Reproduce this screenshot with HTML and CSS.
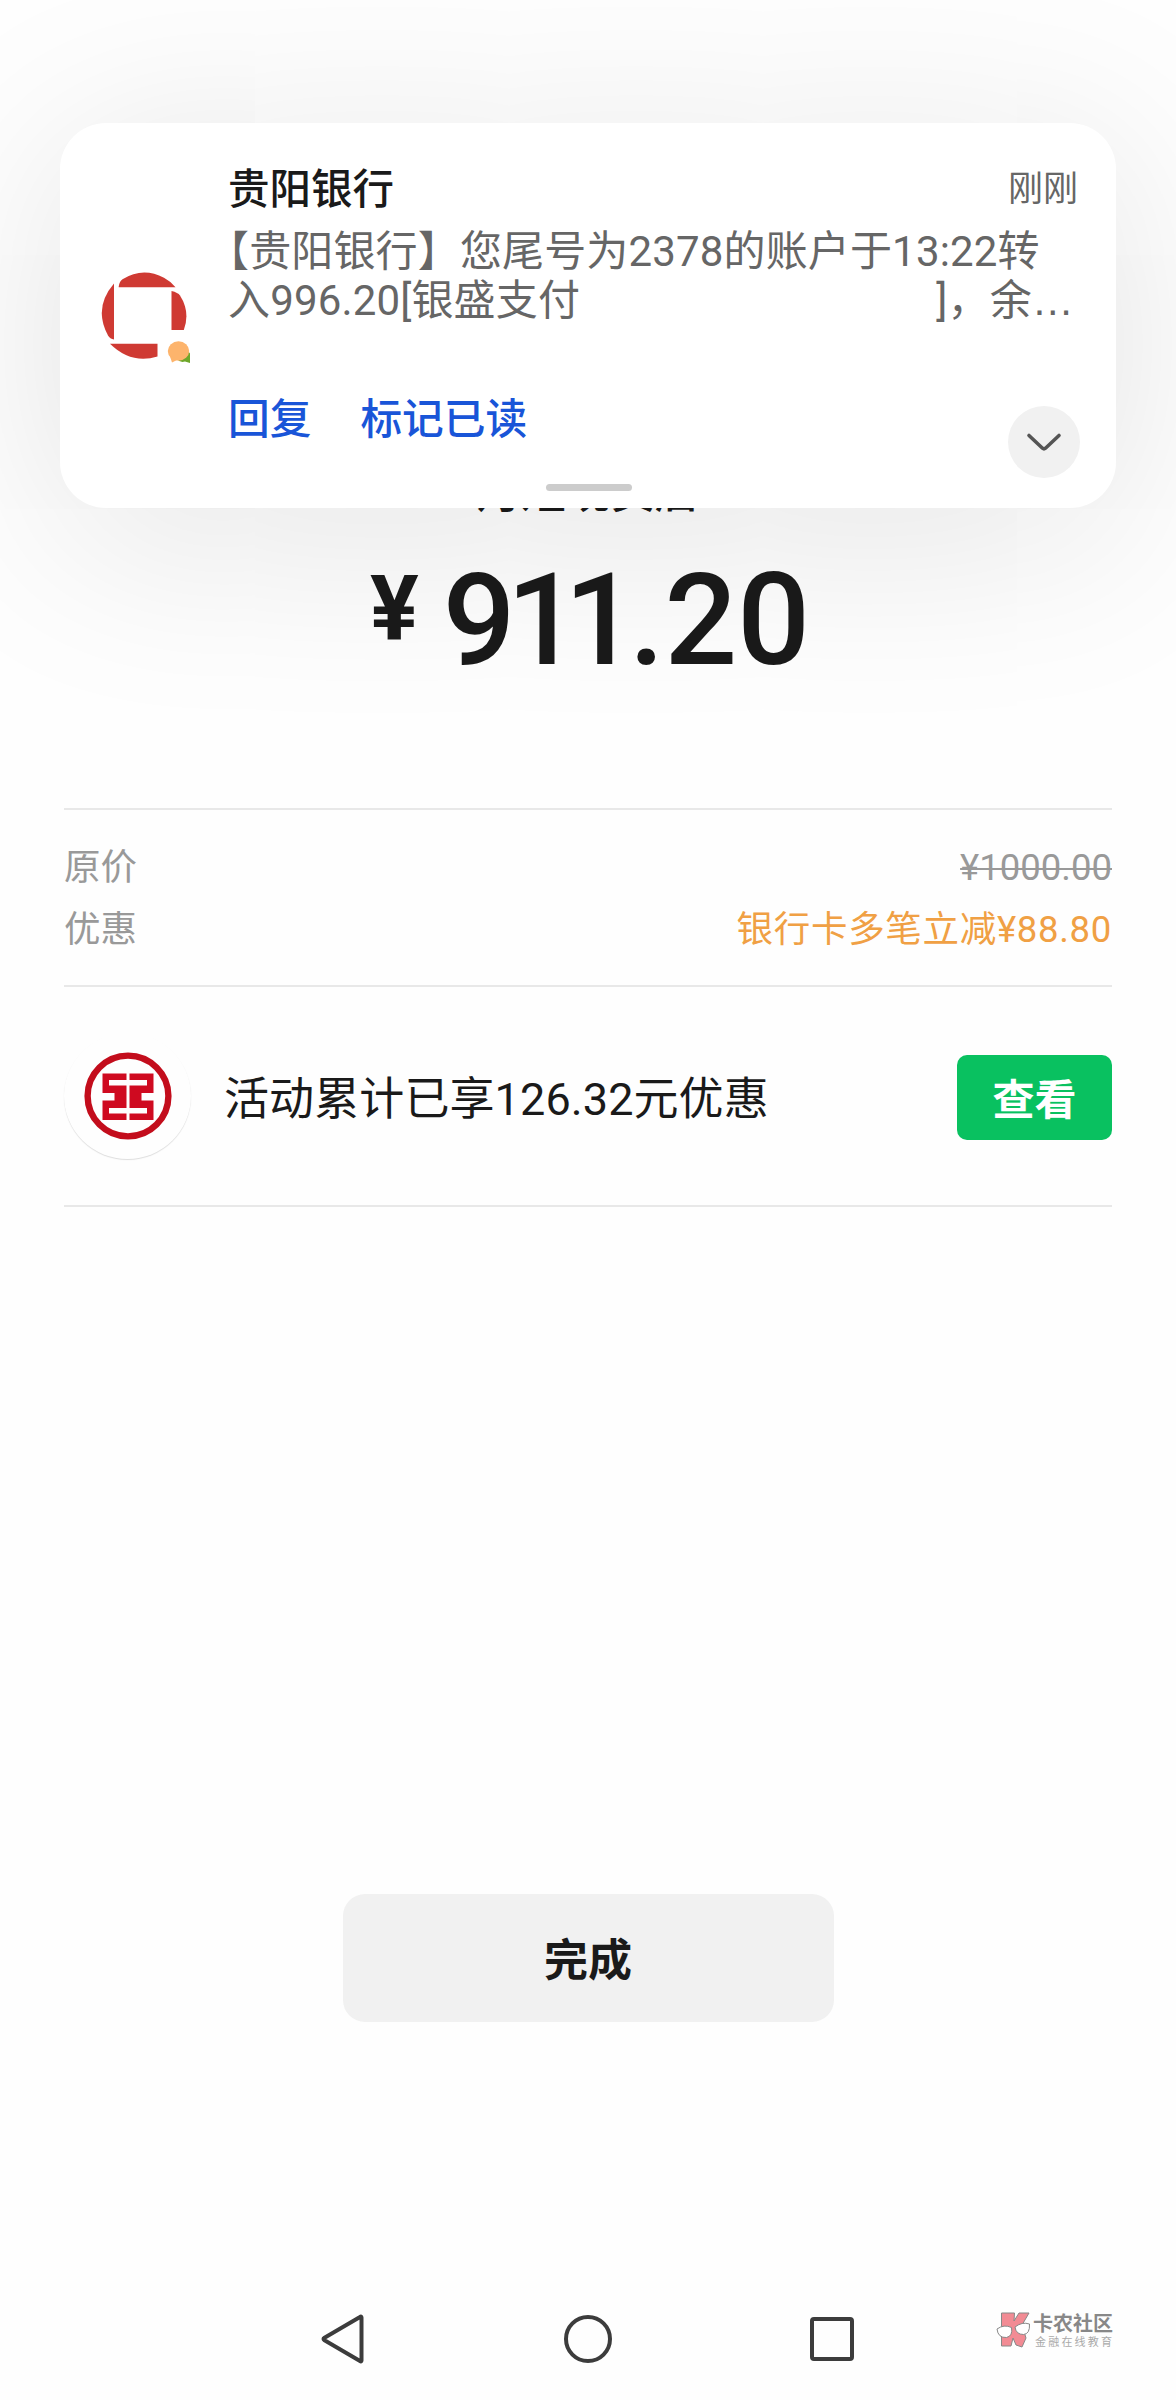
FILE: index.html
```html
<!DOCTYPE html>
<html lang="zh-CN">
<head>
<meta charset="utf-8">
<title>支付完成</title>
<link rel="stylesheet" href="styles.css">
</head>
<body>
<main class="page">
  <section class="summary">
    <h1 class="merchant">月短现员店</h1>
    <div class="amount"><span class="currency">¥</span><span class="value"><span class="nine">9</span><span class="one">1</span><span class="one-last">1</span>.20</span></div>
  </section>

  <section class="details">
    <div class="row"><span>原价</span><span class="was">¥1000.00</span></div>
    <div class="row"><span>优惠</span><span class="off">银行卡多笔立减¥88.80</span></div>
  </section>

  <section class="promo">
    <div class="bank">
      <svg width="88" height="88" viewBox="0 0 88 88">
        <circle cx="44" cy="44" r="40.4" fill="none" stroke="#c30d1c" stroke-width="6.4"/>
        <g fill="#cf0a20">
          <path d="M18.500 21.500H42.500V28H25V33.500H42.500V56H25V61.500H42.500V68H18.500V48.500H30.500V41H18.500Z"/>
          <path d="M69.500 21.500H45.500V28H63V33.500H45.500V56H63V61.500H45.500V68H69.500V48.500H57.500V41H69.500Z"/>
        </g>
      </svg>
    </div>
    <p class="promo-text">活动累计已享126.32元优惠</p>
    <button class="view">查看</button>
  </section>

  <button class="done">完成</button>

  <nav class="navbar">
    <svg class="nav-icon" width="50" height="52" viewBox="0 0 50 52"><path d="M42.500 4.500V47.500Q42.500 49 41 48L5.500 27.300Q3.500 26 5.500 24.700L41 4Q42.500 3 42.500 4.500Z"/></svg>
    <svg class="nav-icon" width="50" height="52" viewBox="0 0 50 52"><circle cx="25" cy="26" r="22"/></svg>
    <svg class="nav-icon" width="50" height="52" viewBox="0 0 50 52"><rect x="5" y="6" width="40" height="40" rx="2"/></svg>
  </nav>
</main>

<aside class="notice">
  <svg class="avatar" width="90" height="94" viewBox="0 0 90 94">
    <g fill="#cf3a33">
      <path d="M18.700 14.500Q19.500 9 22.500 7.200Q43 -5.500 64 5.800Q71 9.600 75.500 15.200H18.700Z"/>
      <path d="M14 11.600V67.500Q10 67 8 63.500Q-7 36 14 11.600Z"/>
      <path d="M71.500 19Q78 20.500 80 23.500Q90.500 40 83.800 58H71.500Z"/>
      <path d="M10 71.700H57.500V84.500Q31 92.500 10 71.700Z"/>
    </g>
    <path d="M80 84L88 79L90 81.500V91L85 89.500Q80 91 77 87Z" fill="#6ea72a"/>
    <ellipse cx="78.500" cy="79" rx="10.700" ry="9.700" fill="#fdb46c"/>
    <path d="M69.500 83L72 90.500L78 87.500Z" fill="#fdb46c"/>
  </svg>
  <div class="content">
    <div class="head"><h2>贵阳银行</h2><time>刚刚</time></div>
    <p class="message"><span class="line"><span class="open">【</span>贵阳银行】您尾号为2378的账户于13:22转</span><span class="line split"><span>入996.20[银盛支付</span><span class="tail">]，余<span class="more">…</span></span></span></p>
    <div class="actions">
      <a>回复</a><a>标记已读</a>
      <span class="toggle"><svg width="36" height="20" viewBox="0 0 36 20"><path d="M3 3.500L16.500 16.200Q18 17.400 19.500 16.200L33 3.500"/></svg></span>
    </div>
  </div>
  <span class="handle"></span>
</aside>

<div class="watermark">
  <svg width="35" height="36" viewBox="0 0 35 36">
    <path d="M5.500 1H18.500L18 9L23 1H33L26 13L30 26L26 35L20 33L17 26L15 34H5.500Z" fill="#f28b94" stroke="#888" stroke-width="1"/>
    <path d="M1 17Q8 12 15.500 15.500Q17 24 10.500 25.500Q2 26 1 17Z" fill="#fff" stroke="#888"/>
    <path d="M19 15Q26 9.500 33.500 12Q34 22 27.500 22.500Q20 22.500 19 15Z" fill="#fff" stroke="#888"/>
  </svg>
  <div class="mark-text"><b>卡农社区</b><small>金融在线教育</small></div>
</div>
</body>
</html>
```
FILE: styles.css
```css
* { box-sizing: border-box; margin: 0; padding: 0; }

body {
  width: 1176px;
  height: 2400px;
  position: relative;
  overflow: hidden;
  background: #fefefe;
  color: #1a1a1a;
  font-family: Roboto, "Noto Sans CJK SC", sans-serif;
}

button { border: 0; font-family: inherit; color: inherit; }

.page { height: 2400px; padding: 0 64px; display: flex; flex-direction: column; }

.summary { height: 808px; padding-top: 466px; display: flex; flex-direction: column; align-items: center; }
.merchant { font-size: 44.5px; line-height: 54px; font-weight: 500; }
.amount { display: flex; align-items: flex-start; margin: 35px 0 0 4px; }
.currency { font-size: 91px; line-height: 108px; font-weight: 700; }
.value { font-size: 128px; line-height: 130px; font-weight: 500; margin-left: 24px; }
.nine { letter-spacing: -9px; }
.one { letter-spacing: -15px; }
.one-last { letter-spacing: -8px; }

.details {
  height: 179px;
  padding-top: 27px;
  border-top: 2px solid #e8e8e8;
  border-bottom: 2px solid #e8e8e8;
}
.row { display: flex; justify-content: space-between; font-size: 36.5px; line-height: 62px; color: #999; }
.was { text-decoration: line-through; text-decoration-thickness: 2px; }
.off { color: #f0a044; letter-spacing: .7px; }

.promo { height: 220px; display: flex; align-items: center; border-bottom: 2px solid #e8e8e8; }
.bank {
  width: 127px; height: 126px;
  border-radius: 50%;
  display: flex; align-items: center; justify-content: center;
  box-shadow: 0 1px 1px #ddd;
}
.promo-text { flex: 1; margin: 7px 0 0 33px; font-size: 45px; line-height: 60px; letter-spacing: .1px; }
.view {
  width: 155px; height: 85px;
  margin-top: 2px;
  padding-bottom: 2px;
  border-radius: 10px;
  background: #09c160;
  color: #fff;
  font-size: 42px;
  font-weight: 700;
}

.done {
  align-self: center;
  width: 491px; height: 128px;
  margin-top: 687px;
  padding-bottom: 3px;
  border-radius: 22px;
  background: #f1f1f1;
  font-size: 44px;
  font-weight: 700;
}

.navbar { margin: 291px 254px 0 255px; display: flex; justify-content: space-between; }
.nav-icon { fill: none; stroke: #3c3c3c; stroke-width: 4; stroke-linejoin: round; }
.nav-icon:last-child { margin-right: 1px; }

/* Floating message card */
.notice {
  position: absolute;
  left: 60px; top: 123px;
  width: 1056px; height: 385px;
  padding: 42px 38px 0 40px;
  display: grid;
  grid-template-columns: 128px 1fr;
  grid-template-rows: 319px auto;
  border-radius: 46px;
  background: #fff;
  box-shadow: 0 28px 200px rgba(0, 0, 0, .115);
}
.avatar { margin-top: 107px; }
.head { display: flex; justify-content: space-between; line-height: 49px; }
.head h2 { font-size: 41.5px; font-weight: 500; }
.head time { font-size: 35px; color: #666; }
.message { margin-top: 13px; font-size: 42px; line-height: 49px; letter-spacing: .15px; color: #666; }
.line { display: block; white-space: nowrap; }
.open { margin-left: -21px; }
.split { display: flex; justify-content: space-between; }
.tail { margin-right: 4px; }
.more { font-family: "Liberation Sans", sans-serif; }
.actions { display: flex; gap: 49px; margin-top: 70px; font-size: 41.7px; line-height: 49px; font-weight: 500; color: #1955d8; }
.toggle {
  width: 72px; height: 72px;
  margin: 11px -2px 0 auto;
  border-radius: 50%;
  background: #f1f1f1;
  display: flex; align-items: center; justify-content: center;
}
.toggle path { fill: none; stroke: #555; stroke-width: 3.600px; stroke-linecap: round; }
.handle { grid-column: 1 / -1; justify-self: center; width: 86px; height: 7px; border-radius: 4px; background: #ccc; }

/* Community stamp in the corner */
.watermark { position: absolute; left: 996px; top: 2312px; display: flex; gap: 2px; }
.mark-text { display: flex; flex-direction: column; color: #888; padding-top: 1px; }
.mark-text b { font-size: 20px; line-height: 22px; }
.mark-text small { font-size: 11px; line-height: 16px; letter-spacing: 2.200px; margin-left: 2px; color: #aaa; }
```
